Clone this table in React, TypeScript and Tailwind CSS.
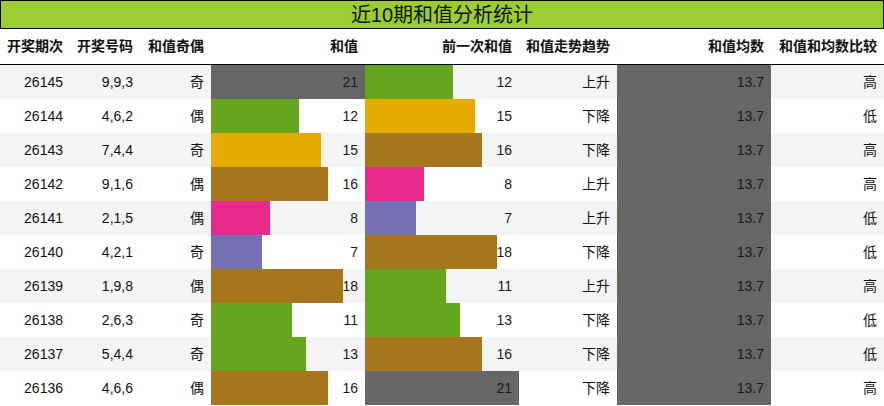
import React from 'react';

interface Row {
  issue: string;
  nums: string;
  parity: string;
  sum: number;
  prev: number;
  trend: string;
  cmp: string;
}

const rows: Row[] = [
  { issue: '26145', nums: '9,9,3', parity: '奇', sum: 21, prev: 12, trend: '上升', cmp: '高' },
  { issue: '26144', nums: '4,6,2', parity: '偶', sum: 12, prev: 15, trend: '下降', cmp: '低' },
  { issue: '26143', nums: '7,4,4', parity: '奇', sum: 15, prev: 16, trend: '下降', cmp: '高' },
  { issue: '26142', nums: '9,1,6', parity: '偶', sum: 16, prev: 8, trend: '上升', cmp: '高' },
  { issue: '26141', nums: '2,1,5', parity: '偶', sum: 8, prev: 7, trend: '上升', cmp: '低' },
  { issue: '26140', nums: '4,2,1', parity: '奇', sum: 7, prev: 18, trend: '下降', cmp: '低' },
  { issue: '26139', nums: '1,9,8', parity: '偶', sum: 18, prev: 11, trend: '上升', cmp: '高' },
  { issue: '26138', nums: '2,6,3', parity: '奇', sum: 11, prev: 13, trend: '下降', cmp: '低' },
  { issue: '26137', nums: '5,4,4', parity: '奇', sum: 13, prev: 16, trend: '下降', cmp: '低' },
  { issue: '26136', nums: '4,6,6', parity: '偶', sum: 16, prev: 21, trend: '下降', cmp: '高' },
];

const MAX = 21;

// Dark2-ish palette keyed by value
const barColor = (v: number) => {
  if (v >= 21) return '#666666';
  if (v >= 16) return '#a6761d';
  if (v >= 14) return '#e6ab02';
  if (v >= 9) return '#66a61e';
  if (v === 8) return '#e7298a';
  return '#7570b3';
};

const cols = 'grid grid-cols-[70px_70px_71px_154px_154px_98px_154px_113px]';

function Cell({ children }: { children: React.ReactNode }) {
  return <div className="flex items-center justify-end pr-[7px]">{children}</div>;
}

function BarCell({ value, color, label }: { value: number; color: string; label: string }) {
  return (
    <div className="relative flex items-center justify-end pr-[7px]">
      <div
        className="absolute left-0 top-0 bottom-0"
        style={{ width: `${(value / MAX) * 100}%`, backgroundColor: color }}
      />
      <span className="relative text-[#1a1a1a]">{label}</span>
    </div>
  );
}

export default function App() {
  return (
    <div
      className="w-[884px] h-[406px] bg-white text-[14px] text-[#111] overflow-hidden"
      style={{ fontFamily: '"Liberation Sans", "Noto Sans CJK SC", sans-serif' }}
    >
      <div className="h-[29px] border border-black bg-[#9acd32] flex items-center justify-center text-[20px] leading-none">
        近10期和值分析统计
      </div>
      <div className={`${cols} h-[36px] border-b border-black font-bold bg-white`}>
        <Cell>开奖期次</Cell>
        <Cell>开奖号码</Cell>
        <Cell>和值奇偶</Cell>
        <Cell>和值</Cell>
        <Cell>前一次和值</Cell>
        <Cell>和值走势趋势</Cell>
        <Cell>和值均数</Cell>
        <Cell>和值和均数比较</Cell>
      </div>
      {rows.map((r, i) => (
        <div key={r.issue} className={`${cols} h-[34px] ${i % 2 === 0 ? 'bg-[#f4f4f4]' : 'bg-white'}`}>
          <Cell>{r.issue}</Cell>
          <Cell>{r.nums}</Cell>
          <Cell>{r.parity}</Cell>
          <BarCell value={r.sum} color={barColor(r.sum)} label={String(r.sum)} />
          <BarCell value={r.prev} color={barColor(r.prev)} label={String(r.prev)} />
          <Cell>{r.trend}</Cell>
          <BarCell value={MAX} color="#666666" label="13.7" />
          <Cell>{r.cmp}</Cell>
        </div>
      ))}
    </div>
  );
}
